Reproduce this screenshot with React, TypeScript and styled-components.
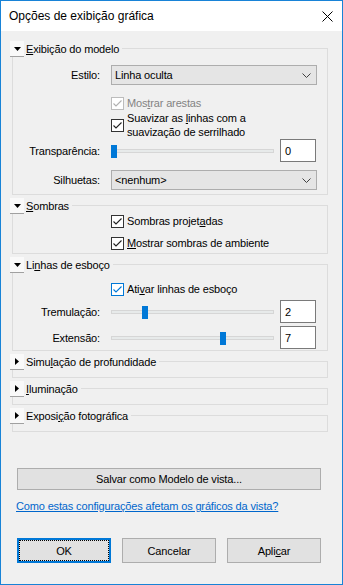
import React from 'react';
import styled, { createGlobalStyle } from 'styled-components';

const GlobalStyle = createGlobalStyle`
  html, body {
    margin: 0;
    padding: 0;
    background: #f0f0f0;
  }
  body {
    font-family: "Liberation Sans", Arial, sans-serif;
    font-size: 11px;
    letter-spacing: -0.15px;
    color: #000;
  }
`;

const Window = styled.div`
  width: 343px;
  height: 585px;
  box-sizing: border-box;
  border: 1px solid #1883d7;
  display: flex;
  flex-direction: column;
  background: #f0f0f0;
`;

const TitleBar = styled.div`
  height: 30px;
  flex-shrink: 0;
  background: #fff;
  display: flex;
  align-items: center;
  justify-content: space-between;
  padding: 0 9px 0 8px;
  font-size: 12px;
  letter-spacing: 0;
`;

const Body = styled.div`
  flex: 1;
  display: flex;
  flex-direction: column;
  padding: 10px 14px 0 9px;
`;

const Section = styled.div`
  display: flex;
  flex-direction: column;
  margin-bottom: ${p => p.$gap ?? 3}px;
`;

const Header = styled.div`
  display: flex;
  height: 16px;
`;

const Toggle = styled.div`
  width: 14px;
  box-sizing: border-box;
  display: flex;
  align-items: center;
  justify-content: center;
  background: #f9f9f9;
  border-bottom: 1px solid #a0a0a0;
`;

const HeaderLabel = styled.span`
  margin-left: 2px;
  line-height: 16px;
  white-space: nowrap;
`;

const HeaderLine = styled.div`
  flex: 1;
  margin: 7px 0 0 3px;
  border-top: 1px solid #dcdcdc;
  border-right: 1px solid #dcdcdc;
`;

const Group = styled.div`
  margin-left: 2px;
  min-height: 7px;
  border: 1px solid #dcdcdc;
  border-top: none;
  padding: ${p => p.$pad ?? '0'};
  display: flex;
  flex-direction: column;
`;

const Row = styled.div`
  display: grid;
  grid-template-columns: 87px 206px;
  column-gap: 11px;
  align-items: center;
  margin-top: ${p => p.$top ?? 0}px;
`;

const Label = styled.span`
  text-align: right;
  white-space: nowrap;
`;

const Select = styled.div`
  height: 20px;
  box-sizing: border-box;
  background: #e5e5e5;
  border: 1px solid #adadad;
  display: flex;
  align-items: center;
  justify-content: space-between;
  padding: 0 5px 0 3px;
`;

const CheckLine = styled.label`
  display: flex;
  align-items: center;
  gap: 3px;
  line-height: 14px;
  color: ${p => (p.$disabled ? '#838383' : '#000')};
`;

const Box = styled.span`
  width: 13px;
  height: 13px;
  box-sizing: border-box;
  flex-shrink: 0;
  background: #fff;
  border: 1px solid ${p => p.$color};
  display: flex;
  align-items: center;
  justify-content: center;
`;

const Control = styled.div`
  display: flex;
  align-items: center;
  gap: 6px;
`;

const Track = styled.div`
  position: relative;
  flex: 1;
  height: 4px;
  box-sizing: border-box;
  background: #e7eaea;
  border: 1px solid #d6d6d6;
`;

const Thumb = styled.div`
  position: absolute;
  top: -5px;
  left: calc(${p => p.$value * 10}% - ${p => p.$value * 0.6 + 1}px);
  width: 6px;
  height: 13px;
  background: #0078d7;
`;

const NumBox = styled.div`
  width: 36px;
  height: 23px;
  box-sizing: border-box;
  background: #fff;
  border: 1px solid #7a7a7a;
  padding-left: 4px;
  display: flex;
  align-items: center;
  margin-right: 1px;
`;

const WideButton = styled.div`
  margin: 36px 0 0 7px;
  width: 304px;
  height: 22px;
  box-sizing: border-box;
  background: #e1e1e1;
  border: 1px solid #adadad;
  display: flex;
  align-items: center;
  justify-content: center;
`;

const HelpLink = styled.a`
  margin: 9px 0 0 6px;
  line-height: 14px;
  color: #0066cc;
  text-decoration: underline;
  white-space: nowrap;
`;

const Footer = styled.div`
  display: flex;
  gap: 11px;
  margin: 25px 0 0 7px;
`;

const Button = styled.div`
  width: 94px;
  height: 25px;
  box-sizing: border-box;
  background: #e1e1e1;
  border: ${p => (p.$default ? '2px solid #0078d7' : '1px solid #adadad')};
  display: flex;
  align-items: stretch;
  padding: ${p => (p.$default ? '0' : '1px')};
`;

const Focus = styled.span`
  flex: 1;
  display: flex;
  align-items: center;
  justify-content: center;
  border: 1px ${p => (p.$show ? 'dotted #000' : 'solid transparent')};
`;

const Arrow = ({ open }: { open: boolean }) =>
  open ? (
    <svg width="7" height="4" viewBox="0 0 7 4">
      <path d="M0 0H7L3.5 4Z" fill="#000" />
    </svg>
  ) : (
    <svg width="4" height="7" viewBox="0 0 4 7">
      <path d="M0 0V7L4 3.5Z" fill="#000" />
    </svg>
  );

const Chevron = () => (
  <svg width="9" height="5" viewBox="0 0 9 5">
    <path d="M0.5 0.5L4.5 4.5L8.5 0.5" fill="none" stroke="#404040" />
  </svg>
);

const Check = ({ color }: { color: string }) => (
  <svg width="11" height="11" viewBox="0 0 11 11">
    <path d="M1.5 5.5L4 8L9.5 2.5" fill="none" stroke={color} strokeWidth="1.1" />
  </svg>
);

type CheckProps = { children: React.ReactNode; disabled?: boolean; focus?: boolean };

const CheckBox = ({ children, disabled, focus }: CheckProps) => {
  const color = disabled ? '#bcbcbc' : focus ? '#0078d7' : '#333';
  return (
    <CheckLine $disabled={disabled}>
      <Box $color={color}>
        <Check color={disabled ? '#b0b0b0' : focus ? '#0078d7' : '#222'} />
      </Box>
      <span>{children}</span>
    </CheckLine>
  );
};

const Slider = ({ value }: { value: number }) => (
  <Control>
    <Track>
      <Thumb $value={value} />
    </Track>
    <NumBox>{value}</NumBox>
  </Control>
);

type PanelProps = { title: React.ReactNode; open?: boolean; pad?: string; gap?: number; children?: React.ReactNode };

const Panel = ({ title, open, pad, gap, children }: PanelProps) => (
  <Section $gap={gap}>
    <Header>
      <Toggle>
        <Arrow open={!!open} />
      </Toggle>
      <HeaderLabel>{title}</HeaderLabel>
      <HeaderLine />
    </Header>
    <Group $pad={pad}>{children}</Group>
  </Section>
);

export default function App() {
  return (
    <>
      <GlobalStyle />
      <Window>
        <TitleBar>
          <span>Opções de exibição gráfica</span>
          <svg width="11" height="11" viewBox="0 0 11 11">
            <path d="M0.5 0.5L10.5 10.5M10.5 0.5L0.5 10.5" stroke="#000" strokeWidth="1" />
          </svg>
        </TitleBar>
        <Body>
          <Panel title={<><u>E</u>xibição do modelo</>} open pad="8px 0 4px 0">
            <Row>
              <Label>Estilo:</Label>
              <Select>
                <span>Linha oculta</span>
                <Chevron />
              </Select>
            </Row>
            <Row $top={11}>
              <span />
              <CheckBox disabled>Mos<u>t</u>rar arestas</CheckBox>
            </Row>
            <Row $top={1}>
              <span />
              <CheckBox>
                Suavizar as <u>l</u>inhas com a<br />suavização de serrilhado
              </CheckBox>
            </Row>
            <Row>
              <Label>Transparência:</Label>
              <Slider value={0} />
            </Row>
            <Row $top={8}>
              <Label>Silhuetas:</Label>
              <Select>
                <span>&lt;nenhum&gt;</span>
                <Chevron />
              </Select>
            </Row>
          </Panel>
          <Panel title={<><u>S</u>ombras</>} open pad="0 0 3px 0">
            <Row>
              <span />
              <CheckBox>Sombras projet<u>a</u>das</CheckBox>
            </Row>
            <Row $top={8}>
              <span />
              <CheckBox><u>M</u>ostrar sombras de ambiente</CheckBox>
            </Row>
          </Panel>
          <Panel title={<>Li<u>n</u>has de esboço</>} open pad="9px 0 1px 0">
            <Row>
              <span />
              <CheckBox focus>Ati<u>v</u>ar linhas de esboço</CheckBox>
            </Row>
            <Row $top={4}>
              <Label>Tremulação:</Label>
              <Slider value={2} />
            </Row>
            <Row $top={3}>
              <Label>Extensão:</Label>
              <Slider value={7} />
            </Row>
          </Panel>
          <Panel title={<>Simu<u>l</u>ação de profundidade</>} />
          <Panel title={<><u>I</u>luminação</>} />
          <Panel title={<>Exposi<u>ç</u>ão fotográfica</>} gap={0} />
          <WideButton>Salvar como Modelo de vista...</WideButton>
          <HelpLink href="#">Como estas configurações afetam os gráficos da vista?</HelpLink>
          <Footer>
            <Button $default>
              <Focus $show>OK</Focus>
            </Button>
            <Button>
              <Focus>Cancelar</Focus>
            </Button>
            <Button>
              <Focus>Apli<u>c</u>ar</Focus>
            </Button>
          </Footer>
        </Body>
      </Window>
    </>
  );
}
